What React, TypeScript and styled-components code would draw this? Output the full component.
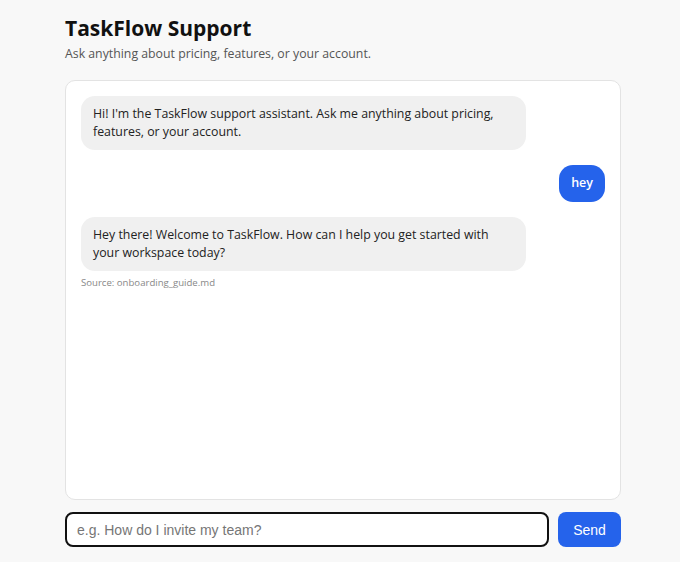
import React from "react";
import styled, { createGlobalStyle } from "styled-components";

const Global = createGlobalStyle`
  html, body { margin: 0; padding: 0; background: #f8f8f8; }
  body { font-family: "Segoe UI", "Open Sans", "Noto Sans", sans-serif; color: #111; }
  * { box-sizing: border-box; }
`;

const Page = styled.div`
  width: 556px;
  margin-left: 65px;
  padding-top: 14px;
  height: 562px;
  display: flex;
  flex-direction: column;
`;

const Title = styled.h1`
  margin: 0;
  font-family: "Open Sans", sans-serif;
  font-size: 21px;
  font-weight: 700;
  line-height: 28px;
  color: #111;
`;

const Subtitle = styled.p`
  margin: 3px 0 0;
  font-family: "Open Sans", sans-serif;
  font-size: 12.3px;
  line-height: 18px;
  color: #555;
`;

const Panel = styled.div`
  margin-top: 17px;
  height: 420px;
  background: #fff;
  border: 1px solid #e3e3e3;
  border-radius: 10px;
  padding: 15px;
  display: flex;
  flex-direction: column;
  gap: 15px;
`;

const Group = styled.div<{ $user?: boolean }>`
  display: flex;
  flex-direction: column;
  align-items: ${(p) => (p.$user ? "flex-end" : "flex-start")};
`;

const Bubble = styled.div<{ $user?: boolean }>`
  max-width: 85%;
  padding: 9px 12px;
  border-radius: 14px;
  font-family: "Open Sans", sans-serif;
  font-size: ${(p) => (p.$user ? "12.5px" : "12.35px")};
  line-height: 18px;
  background: ${(p) => (p.$user ? "#2563eb" : "#f0f0f0")};
  color: ${(p) => (p.$user ? "#fff" : "#222")};
  font-weight: ${(p) => (p.$user ? 600 : 400)};
  ${(p) => (p.$user ? "padding: 9px 12px 10px;" : "width: 85%;")}
`;

const Source = styled.div`
  margin-top: 5px;
  font-family: "Open Sans", sans-serif;
  font-size: 9.6px;
  color: #888;
`;

const InputRow = styled.form`
  margin-top: 12px;
  display: flex;
  gap: 9px;
`;

const Input = styled.input`
  flex: 1;
  height: 35px;
  border: 2px solid #111;
  border-radius: 8px;
  padding: 0 10px;
  font-family: "Liberation Sans", Arial, sans-serif;
  font-size: 14px;
  outline: none;
  background: #fff;
  &::placeholder { color: #767676; }
`;

const SendButton = styled.button`
  width: 63px;
  height: 35px;
  border: none;
  border-radius: 8px;
  background: #2563eb;
  color: #fff;
  font-family: "Liberation Sans", Arial, sans-serif;
  font-size: 14px;
  font-weight: 500;
`;

export default function App() {
  return (
    <>
      <Global />
      <Page>
        <Title>TaskFlow Support</Title>
        <Subtitle>Ask anything about pricing, features, or your account.</Subtitle>
        <Panel>
          <Group>
            <Bubble>
              Hi! I'm the TaskFlow support assistant. Ask me anything about pricing, features, or your account.
            </Bubble>
          </Group>
          <Group $user>
            <Bubble $user>hey</Bubble>
          </Group>
          <Group>
            <Bubble>
              Hey there! Welcome to TaskFlow. How can I help you get started with your workspace today?
            </Bubble>
            <Source>Source: onboarding_guide.md</Source>
          </Group>
        </Panel>
        <InputRow onSubmit={(e) => e.preventDefault()}>
          <Input placeholder="e.g. How do I invite my team?" autoFocus />
          <SendButton type="submit">Send</SendButton>
        </InputRow>
      </Page>
    </>
  );
}
